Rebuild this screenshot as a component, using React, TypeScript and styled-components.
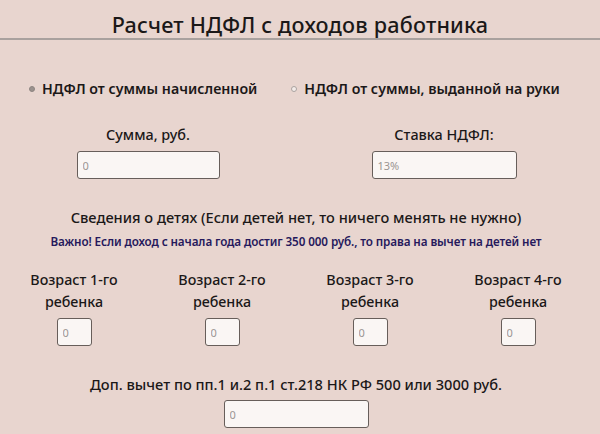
import React from 'react';
import styled, { createGlobalStyle } from 'styled-components';

const GlobalStyle = createGlobalStyle`
  html, body {
    margin: 0;
    padding: 0;
    background: #e8d5cf;
  }

  body {
    font-family: "Noto Sans", "Open Sans", sans-serif;
    color: #1b1818;
  }
`;

const Page = styled.div`
  width: 600px;
  height: 434px;
  overflow: hidden;
  background: #e8d5cf;
`;

const Header = styled.header`
  height: 40px;
  border-bottom: 2px solid #a9a19e;
  display: flex;
  justify-content: center;
  box-sizing: border-box;
`;

const Title = styled.h1`
  margin: 0;
  width: 592px;
  text-align: center;
  font-size: 21.6px;
  font-weight: 500;
  line-height: 49px;
  letter-spacing: 0.2px;
`;

const Body = styled.main`
  width: 592px;
  display: flex;
  flex-direction: column;
  align-items: stretch;
`;

const RadioRow = styled.div`
  display: flex;
  align-items: center;
  padding: 39px 0 0 29px;
  gap: 34px;
  height: 20px;
  box-sizing: content-box;
`;

const RadioLabel = styled.label`
  display: flex;
  align-items: center;
  gap: 7px;
  font-size: 14.2px;
  font-weight: 600;
  line-height: 20px;
  white-space: nowrap;
`;

const RadioDot = styled.span<{ $checked?: boolean }>`
  width: 6px;
  height: 6px;
  border-radius: 50%;
  box-sizing: border-box;
  border: 1px solid ${(p) => (p.$checked ? '#8d8581' : '#aaa3a0')};
  background: ${(p) => (p.$checked ? '#9b928e' : '#f4ece9')};
`;

const TwoCols = styled.div`
  display: grid;
  grid-template-columns: 1fr 1fr;
  margin-top: 26px;
`;

const Field = styled.div`
  display: flex;
  flex-direction: column;
  align-items: center;
  gap: 6px;
`;

const Label = styled.div<{ $size?: number }>`
  font-size: ${(p) => p.$size ?? 14.4}px;
  font-weight: 500;
  line-height: 20px;
  text-align: center;
  white-space: nowrap;
`;

const Input = styled.input<{ $w: number }>`
  width: ${(p) => p.$w}px;
  height: 28px;
  box-sizing: border-box;
  border: 1.5px solid #675e5a;
  border-radius: 3px;
  background: #faf6f4;
  padding: 0 5px;
  font-family: "Noto Sans", "Open Sans", sans-serif;
  font-size: 11px;
  color: #1b1818;
  outline: none;

  &::placeholder {
    color: #9a9593;
  }
`;

const Heading = styled.div`
  margin-top: 28px;
  font-size: 14.6px;
  font-weight: 500;
  line-height: 20px;
  text-align: center;
  white-space: nowrap;
`;

const Note = styled.div`
  margin-top: 6px;
  font-size: 11.7px;
  font-weight: 600;
  line-height: 16px;
  color: #26195c;
  text-align: center;
  white-space: nowrap;
  letter-spacing: -0.1px;
`;

const FourCols = styled.div`
  display: grid;
  grid-template-columns: repeat(4, 1fr);
  margin-top: 21px;
`;

const AgeField = styled(Field)`
  gap: 5px;
`;

const AgeLabel = styled(Label)`
  line-height: 22px;
  white-space: normal;
  width: 110px;
  margin-top: -1px;
`;

const Bottom = styled(Field)`
  margin-top: 28px;
`;

const children = [1, 2, 3, 4];

export default function App() {
  return (
    <Page>
      <GlobalStyle />
      <Header>
        <Title>Расчет НДФЛ с доходов работника</Title>
      </Header>
      <Body>
        <RadioRow>
          <RadioLabel>
            <RadioDot $checked />
            НДФЛ от суммы начисленной
          </RadioLabel>
          <RadioLabel>
            <RadioDot />
            НДФЛ от суммы, выданной на руки
          </RadioLabel>
        </RadioRow>

        <TwoCols>
          <Field>
            <Label>Сумма, руб.</Label>
            <Input $w={143} placeholder="0" />
          </Field>
          <Field>
            <Label>Ставка НДФЛ:</Label>
            <Input $w={145} placeholder="13%" />
          </Field>
        </TwoCols>

        <Heading>Сведения о детях (Если детей нет, то ничего менять не нужно)</Heading>
        <Note>Важно! Если доход с начала года достиг 350 000 руб., то права на вычет на детей нет</Note>

        <FourCols>
          {children.map((n) => (
            <AgeField key={n}>
              <AgeLabel $size={14.3}>
                Возраст {n}-го
                <br />
                ребенка
              </AgeLabel>
              <Input $w={35} placeholder="0" />
            </AgeField>
          ))}
        </FourCols>

        <Bottom>
          <Label $size={14.6}>Доп. вычет по пп.1 и.2 п.1 ст.218 НК РФ 500 или 3000 руб.</Label>
          <Input $w={145} placeholder="0" />
        </Bottom>
      </Body>
    </Page>
  );
}
